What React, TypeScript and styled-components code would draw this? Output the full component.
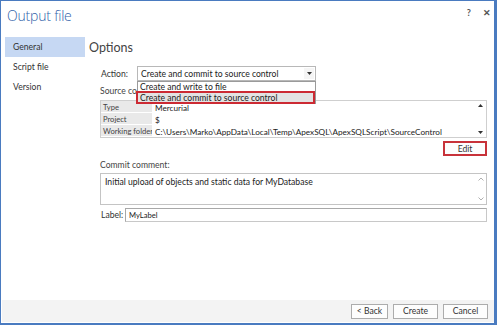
import React from "react";
import styled, { createGlobalStyle } from "styled-components";

const Global = createGlobalStyle`
  html, body { margin: 0; padding: 0; background: #ffffff; }
  #root { width: 497px; height: 325px; }
  * { box-sizing: border-box; }
`;

const FONT = `"Lato", "Open Sans", "Liberation Sans", sans-serif`;

const Window = styled.div`
  width: 497px;
  height: 325px;
  border: 1px solid #4a7bc0;
  border-right-width: 3px;
  border-bottom-width: 2px;
  background: #ffffff;
  display: flex;
  flex-direction: column;
  font-family: ${FONT};
  font-size: 8.6px;
  color: #333333;
  overflow: hidden;
`;

const TitleBar = styled.div`
  height: 35px;
  display: flex;
  align-items: flex-start;
  justify-content: space-between;
  padding: 5px 3px 0 6px;
`;

const Title = styled.div`
  font-family: "Open Sans", "Noto Sans", sans-serif;
  font-weight: 300;
  font-size: 14px;
  color: #2f62a9;
  letter-spacing: -0.2px;
`;

const TitleButtons = styled.div`
  display: flex;
  gap: 12px;
  padding-top: 1px;
  color: #555;
  font-size: 9px;
  font-weight: 700;
`;

const Body = styled.div`
  flex: 1;
  display: flex;
  padding-top: 1px;
`;

const Sidebar = styled.div`
  width: 80px;
  margin-left: 4px;
  display: flex;
  flex-direction: column;
`;

const NavItem = styled.div<{ $active?: boolean }>`
  height: 20px;
  display: flex;
  align-items: center;
  padding-left: 8px;
  background: ${(p) => (p.$active ? "#c6d8f3" : "transparent")};
  color: #333;
`;

const Content = styled.div`
  flex: 1;
  padding: 0 7px 0 4px;
  display: flex;
  flex-direction: column;
`;

const Heading = styled.div`
  height: 20px;
  display: flex;
  align-items: center;
  font-size: 12.5px;
  color: #444;
`;

const ActionRow = styled.div`
  margin-top: 9px;
  padding-left: 12px;
  display: flex;
  align-items: center;
  position: relative;
`;

const FieldLabel = styled.span<{ $w?: number }>`
  width: ${(p) => p.$w ?? 36}px;
  flex: none;
`;

const Combo = styled.div`
  width: 179px;
  height: 15px;
  border: 1px solid #b8b8b8;
  display: flex;
  align-items: center;
  padding-left: 3px;
  color: #222;
  position: relative;
`;

const ComboArrow = styled.div`
  position: absolute;
  right: 1px;
  top: 1px;
  bottom: 1px;
  width: 10px;
  display: flex;
  align-items: center;
  justify-content: center;
  background: #f5f5f5;
`;

const DropList = styled.div`
  position: absolute;
  left: 48px;
  top: 15px;
  width: 179px;
  background: #fff;
  border: 1px solid #9a9a9a;
  border-bottom: none;
  z-index: 5;
  padding-top: 1px;
`;

const DropItem = styled.div<{ $hl?: boolean }>`
  height: ${(p) => (p.$hl ? 13 : 8)}px;
  display: flex;
  align-items: center;
  padding-left: 2px;
  color: #222;
  white-space: nowrap;
  background: ${(p) => (p.$hl ? "#e3e3e3" : "transparent")};
  border: ${(p) => (p.$hl ? "2px solid #cc2a33" : "none")};
  margin-left: ${(p) => (p.$hl ? "-2px" : "0")};
`;

const SectionLabel = styled.div<{ $mt: number }>`
  margin-top: ${(p) => p.$mt}px;
  padding-left: 11px;
  height: 10px;
  display: flex;
  align-items: center;
  color: #444;
`;

const Grid = styled.div`
  margin-top: 4px;
  margin-left: 11px;
  height: 38px;
  border: 1px solid #cfcfcf;
  display: flex;
  font-size: 8.2px;
`;

const GridTable = styled.div`
  flex: 1;
  display: grid;
  grid-template-columns: 51px 1fr;
  grid-auto-rows: 12px;
`;

const Key = styled.div`
  background: #e9e9e9;
  padding-left: 2px;
  display: flex;
  align-items: center;
  font-size: 7.6px;
  color: #444;
  white-space: nowrap;
  overflow: hidden;
  border-bottom: 1px solid #ffffff;
`;

const Val = styled.div`
  padding-left: 3px;
  padding-top: 1px;
  display: flex;
  align-items: center;
  color: #222;
  white-space: nowrap;
  overflow: hidden;
`;

const VScroll = styled.div`
  width: 11px;
  display: flex;
  flex-direction: column;
  justify-content: space-between;
  align-items: center;
  padding: 3px 0 3px;
`;

const EditRow = styled.div`
  display: flex;
  justify-content: flex-end;
  margin-top: 3px;
`;

const Button = styled.div<{ $red?: boolean; $w?: number }>`
  width: ${(p) => p.$w ?? 45}px;
  height: 15px;
  display: flex;
  align-items: center;
  justify-content: center;
  background: #fdfdfd;
  border: ${(p) => (p.$red ? "2px solid #c8323a" : "1px solid #acacac")};
  color: #333;
`;

const TextArea = styled.div`
  margin-top: 3px;
  margin-left: 11px;
  height: 32px;
  border: 1px solid #c4c4c4;
  display: flex;
`;

const TextBody = styled.div`
  flex: 1;
  padding: 3px 0 0 4px;
  color: #222;
`;

const LabelRow = styled.div`
  margin-top: 3px;
  padding-left: 12px;
  display: flex;
  align-items: center;
`;

const Input = styled.div`
  flex: 1;
  height: 14px;
  border: 1px solid #c8c8c8;
  border-top-color: #a8a8a8;
  border-left-color: #a8a8a8;
  display: flex;
  align-items: center;
  padding-left: 3px;
  font-size: 7.6px;
  color: #222;
`;

const Footer = styled.div`
  height: 22px;
  margin: 0 0 1px 1px;
  background: #f3f3f3;
  display: flex;
  justify-content: flex-end;
  align-items: center;
  gap: 5px;
  padding-right: 6px;
`;

const Tri = ({ down = true }: { down?: boolean }) => (
  <svg width="5" height="3" viewBox="0 0 5 3">
    <path d={down ? "M0 0 H5 L2.5 3 Z" : "M0 3 H5 L2.5 0 Z"} fill="#333" />
  </svg>
);

const Chevron = ({ down = true }: { down?: boolean }) => (
  <svg width="6" height="4" viewBox="0 0 6 4">
    <path
      d={down ? "M0.5 0.5 L3 3 L5.5 0.5" : "M0.5 3.5 L3 1 L5.5 3.5"}
      stroke="#b0b0b0"
      strokeWidth="1"
      fill="none"
    />
  </svg>
);

export default function App() {
  return (
    <>
      <Global />
      <Window>
        <TitleBar>
          <Title>Output file</Title>
          <TitleButtons>
            <span>?</span>
            <span>✕</span>
          </TitleButtons>
        </TitleBar>
        <Body>
          <Sidebar>
            <NavItem $active>General</NavItem>
            <NavItem>Script file</NavItem>
            <NavItem>Version</NavItem>
          </Sidebar>
          <Content>
            <Heading>Options</Heading>
            <ActionRow>
              <FieldLabel>Action:</FieldLabel>
              <Combo>
                Create and commit to source control
                <ComboArrow>
                  <Tri />
                </ComboArrow>
              </Combo>
              <DropList>
                <DropItem>Create and write to file</DropItem>
                <DropItem $hl>Create and commit to source control</DropItem>
              </DropList>
            </ActionRow>
            <SectionLabel $mt={5}>Source control</SectionLabel>
            <Grid>
              <GridTable>
                <Key>Type</Key>
                <Val>Mercurial</Val>
                <Key>Project</Key>
                <Val>$</Val>
                <Key>Working folder</Key>
                <Val>C:\Users\Marko\AppData\Local\Temp\ApexSQL\ApexSQLScript\SourceControl</Val>
              </GridTable>
              <VScroll>
                <Tri down={false} />
                <Tri />
              </VScroll>
            </Grid>
            <EditRow>
              <Button $red $w={44}>Edit</Button>
            </EditRow>
            <SectionLabel $mt={4}>Commit comment:</SectionLabel>
            <TextArea>
              <TextBody>Initial upload of objects and static data for MyDatabase</TextBody>
              <VScroll>
                <Chevron down={false} />
                <Chevron />
              </VScroll>
            </TextArea>
            <LabelRow>
              <FieldLabel $w={24}>Label:</FieldLabel>
              <Input>MyLabel</Input>
            </LabelRow>
          </Content>
        </Body>
        <Footer>
          <Button $w={37}>&lt; Back</Button>
          <Button>Create</Button>
          <Button>Cancel</Button>
        </Footer>
      </Window>
    </>
  );
}
